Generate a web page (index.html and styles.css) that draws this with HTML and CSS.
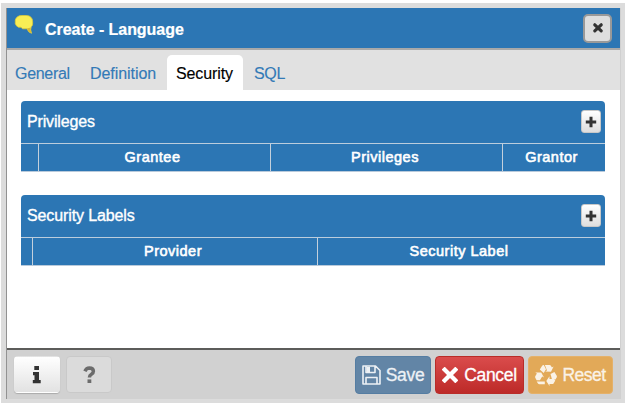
FILE: index.html
```html
<!DOCTYPE html>
<html lang="en">
<head>
<meta charset="utf-8">
<title>Create - Language</title>
<link rel="stylesheet" href="styles.css">
</head>
<body>
<div class="frame">
  <div class="dialog">
    <header class="header">
      <svg class="bubble" width="20" height="21" viewBox="0 0 20 21"><path d="M7.500 1.500h5q3.200.2 4.400 1.700 1.700 1.600 1.700 4.300v2.800q-.2 1.700-1.400 2.400l-.5 3 .8 3.600q-3-.6-4.400-4.500H8.500L7 13.200H4.500Q2 12 1.300 9.700V6Q1.700 4 3.500 2.800 5 1.600 7.500 1.500z" fill="#f8ee55" stroke="#dccb3a" stroke-width=".8"/><path d="M13 14.500q1.400 3.800 4.300 4.500l-.8-3.500.3-2z" fill="#dcb92e"/></svg>
      <h1 class="title">Create - Language</h1>
      <button class="close" aria-label="Close"><svg width="12" height="12" viewBox="0 0 12 12"><path d="M2.800 2.800l6.400 6M9.200 2.800l-6.400 6" stroke="#333" stroke-width="3.200" stroke-linecap="round"/></svg></button>
    </header>
    <nav class="tabs">
      <a class="tab t-general"><span>General</span></a>
      <a class="tab t-definition"><span>Definition</span></a>
      <a class="tab t-security active"><span>Security</span></a>
      <a class="tab t-sql"><span>SQL</span></a>
    </nav>
    <main class="body">
      <section class="grid">
        <div class="grid-head"><h2 class="g-privileges">Privileges</h2><button class="add" aria-label="Add"><svg width="12" height="12" viewBox="0 0 12 12"><path d="M6 .8v10.400M.8 6h10.400" stroke="#333" stroke-width="3"/></svg></button></div>
        <div class="cols cols-privileges"><div></div><div>Grantee</div><div>Privileges</div><div>Grantor</div></div>
      </section>
      <section class="grid">
        <div class="grid-head"><h2 class="g-labels">Security Labels</h2><button class="add" aria-label="Add"><svg width="12" height="12" viewBox="0 0 12 12"><path d="M6 .8v10.400M.8 6h10.400" stroke="#333" stroke-width="3"/></svg></button></div>
        <div class="cols cols-labels"><div></div><div>Provider</div><div>Security Label</div></div>
      </section>
    </main>
    <footer class="footer">
      <button class="btn info" aria-label="Info"><svg width="10" height="18" viewBox="0 0 10 18"><path d="M2.300 0h4.700v3.900H2.300zM1 6h6v8h1.700v3.200H.8V14h1.700V9.200H1z" fill="#333"/></svg></button>
      <button class="btn help" aria-label="Help"><svg width="13" height="18" viewBox="0 0 13 18"><path d="M1.900 5.200Q3.300 2 6.400 2q3.900.1 4 3.300 0 1.800-2 3-1.900 1-2 3.200" fill="none" stroke="#6c6c6c" stroke-width="3.500"/><path d="M4.500 13.400h3.800V17H4.500z" fill="#6c6c6c"/></svg></button>
      <span class="spacer"></span>
      <button class="btn save"><svg width="19" height="20" viewBox="0 0 19 20"><path d="M1 1h12.500L18 5.500V19H1zM4 1v6.500h9V1M4 19v-6.500h11V19" fill="none" stroke="#edf1f5" stroke-width="1.600" stroke-linejoin="round"/><path d="M4.500 2H8v5H4.500z" fill="#edf1f5"/></svg><span>Save</span></button>
      <button class="btn cancel"><svg width="16" height="16" viewBox="0 0 16 16"><path d="M2.700 2.700l10.600 10.600M13.300 2.700L2.700 13.300" stroke="#fff" stroke-width="4.300" stroke-linecap="square"/></svg><span>Cancel</span></button>
      <button class="btn reset"><svg width="22" height="21" viewBox="0 0 22 21"><g fill="#faf2e6"><path d="M4.800 4.600L7 1Q7.700 0 8.800.1L11 4.200 8.700 8zM9.900 0h4.600q.9 0 1.400.8l1 1.800L18.600 1.600 16 6.800l-5.800-.2L12 5.500zM15.500 9.100l3.900-2.200 2.200 3.700q.6 1.100 0 2l-1.100 1.900H17zM20.300 15.400l-1.600 2.800q-.5.900-1.500.9h-2.700v1.900l-3.200-4.900 3.200-4.900v2.900h4zM1.600 15.200L.4 13q-.6-1 0-2.100l1.500-2.500L.2 7.400h6l2.800 5-1.800-1-2.300 3.800zM9.800 19.200H4.500q-1.200 0-1.700-.9L1.700 16.400h8.100z"/></g></svg><span>Reset</span></button>
    </footer>
  </div>
</div>
</body>
</html>
```

FILE: styles.css
```css
* { box-sizing: border-box; }
body { margin: 0; background: #fff; font-family: "Liberation Sans", Arial, sans-serif; overflow: hidden; }
.frame { margin: 3px 0 0 1px; width: 624px; height: 400px; padding: 5px 4px 4px 5px; background: #dcdcdc; }
.dialog { width: 615px; height: 391px; border-left: 1px solid #929292; border-right: 1px solid #d0d0d0; display: flex; flex-direction: column; background: #fff; }
button { font: inherit; margin: 0; padding: 0; display: flex; align-items: center; justify-content: center; }
svg { display: block; flex: none; }
span, h1, h2 { white-space: nowrap; }

.header { height: 42px; flex: none; background: #2c76b4; border-bottom: 2px solid #a9a9a9; display: flex; align-items: flex-start; padding: 6px 8px 0 7px; }
.title { margin: 6px auto 0 11px; font-size: 16px; line-height: 20px; font-weight: bold; letter-spacing: -.05px; color: #fff; -webkit-text-stroke: .2px #fff; }
.close { width: 29px; height: 29px; border: 2px solid #999; border-radius: 5px; background: #dedede; padding: 0 0 1px 1px; }

.tabs { height: 40px; flex: none; background: #e1e1e1; display: flex; align-items: flex-end; }
.tab { height: 35px; padding-top: 9px; font-size: 16px; line-height: 20px; color: #337ab7; -webkit-text-stroke: .15px; }
.t-general { width: 83px; padding-left: 8px; letter-spacing: -.3px; }
.t-definition { width: 77px; letter-spacing: -.05px; }
.t-security { width: 76px; padding-left: 9px; letter-spacing: -.1px; }
.t-sql { padding-left: 11px; letter-spacing: -.3px; }
.active { background: #fff; color: #000; border-radius: 5px 5px 0 0; }

.body { flex: 1; padding: 11px 15px 0 14px; display: flex; flex-direction: column; gap: 23px; }
.grid { height: 71px; background: #2c76b4; border-radius: 4px 4px 0 0; border-bottom: 1px solid #b9cadb; }
.grid-head { height: 42px; display: flex; align-items: center; justify-content: space-between; padding: 0 4px 0 6px; }
.grid h2 { margin: 0; font-size: 16px; font-weight: normal; line-height: 20px; color: #fff; -webkit-text-stroke: .35px #fff; }
.g-privileges { letter-spacing: -.15px; }
.g-labels { letter-spacing: -.12px; }
.add { width: 20px; height: 23px; margin-top: -1px; border: 1px solid #c8c8c8; border-radius: 3px; background: linear-gradient(#fff, #dedede); }
.cols { height: 28px; border-top: 1px solid #bccddd; display: grid; font-size: 14.5px; font-weight: normal; letter-spacing: .5px; -webkit-text-stroke: .6px #fff; line-height: 26px; text-align: center; color: #fff; }
.cols div + div { border-left: 1px solid #c4d0dc; }
.cols-privileges { grid-template-columns: 17px 232px 232px 1fr; }
.cols-privileges div:nth-child(2) { padding-right: 4px; }
.cols-privileges div:nth-child(3) { padding-right: 3px; }
.cols-privileges div:last-child { padding-right: 5px; }
.cols-labels { grid-template-columns: 11px 285px 1fr; }
.cols-labels div:nth-child(2) { padding-right: 4px; }
.cols-labels div:last-child { padding-right: 5px; }

.footer { height: 51px; flex: none; background: #d1d1d1; border-top: 2px solid #5c5c5a; display: flex; align-items: flex-start; padding: 6px 7px 0 7px; }
.btn { height: 38px; border-radius: 4px; font-size: 17.5px; color: #fff; border: 1px solid transparent; }
.btn span { -webkit-text-stroke: .3px; }
.info { width: 46px; height: 37px; background: linear-gradient(#fff, #e2e2e2); box-shadow: 0 1px 1px #aaa; }
.help { width: 46px; height: 37px; margin-left: 6px; background: #dbdbdb; border-color: #c9c9c9; }
.spacer { flex: 1; }
.save { width: 76px; background: #6285a6; border-color: #557da2; gap: 5px; color: #edf1f5; letter-spacing: -.3px; }
.cancel { width: 89px; margin-left: 4px; background: linear-gradient(#da4c4c, #bd2a28); border-color: #b92c28; gap: 6px; letter-spacing: -.3px; }
.reset { width: 85px; margin-left: 4px; background: #e2a958; border-color: #e5b169; gap: 5px; color: #faf2e6; letter-spacing: -.5px; }
```
